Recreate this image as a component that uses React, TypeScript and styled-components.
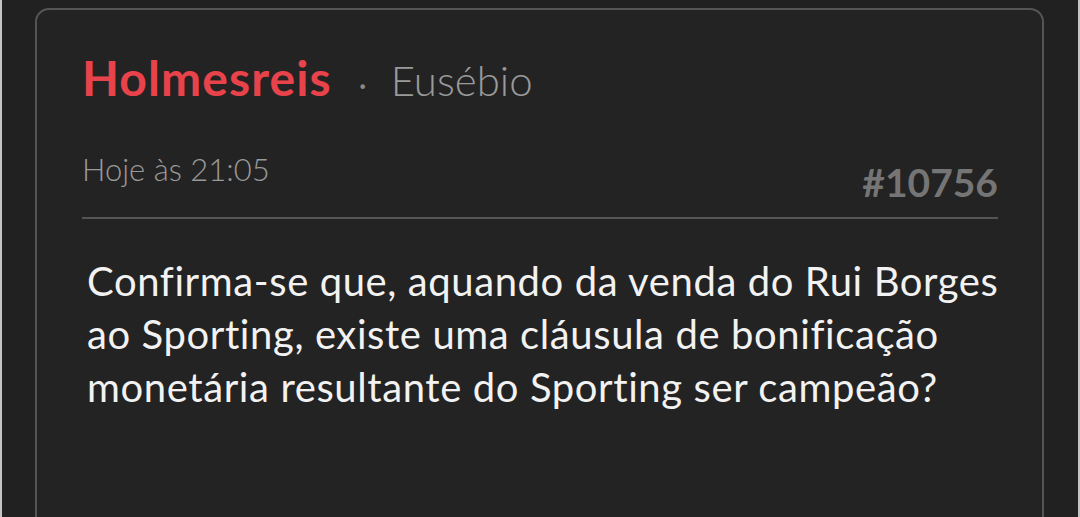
import styled, { createGlobalStyle } from "styled-components";

const GlobalStyle = createGlobalStyle`
  html, body {
    margin: 0;
    padding: 0;
    background: #212121;
  }
  body {
    font-family: Lato, "Open Sans", sans-serif;
    overflow: hidden;
  }
`;

function App() {
  return (
    <>
      <GlobalStyle />
      <Page>
        <Card>
          <Author>
            <Name>Holmesreis</Name>
            <Dot>·</Dot>
            <Rank>Eusébio</Rank>
          </Author>
          <Meta>
            <Time>Hoje às 21:05</Time>
            <PostId>#10756</PostId>
          </Meta>
          <Body>
            Confirma-se que, aquando da venda do Rui Borges
            <br />
            ao Sporting, existe uma cláusula de bonificação
            <br />
            monetária resultante do Sporting ser campeão?
          </Body>
        </Card>
      </Page>
    </>
  );
}

export default App;

const Page = styled.div`
  height: 517px;
  box-sizing: border-box;
  border-left: 2px solid #c4c4c4;
  border-right: 2px solid #c4c4c4;
  padding: 8px 34px 0 33px;
  overflow: hidden;
`;

const Card = styled.div`
  height: 560px;
  box-sizing: border-box;
  border: 2px solid #555;
  border-radius: 14px;
  background: #232323;
  padding: 39px 44px 0 45px;
`;

const Author = styled.div`
  display: flex;
  align-items: baseline;
  height: 60px;
`;

const Name = styled.span`
  font-size: 48px;
  font-weight: 700;
  letter-spacing: 1.1px;
  color: #e8434a;
`;

const Dot = styled.span`
  font-size: 30px;
  color: #8a8a8a;
  margin: 0 24px 0 27px;
`;

const Rank = styled.span`
  font-size: 42px;
  font-weight: 300;
  color: #9a9a9a;
`;

const Meta = styled.div`
  display: flex;
  justify-content: space-between;
  align-items: flex-end;
  margin-top: 41px;
  padding-bottom: 12px;
  border-bottom: 2px solid #555;
`;

const Time = styled.span`
  font-size: 31px;
  font-weight: 300;
  color: #9a9a9a;
  margin-bottom: 17px;
`;

const PostId = styled.span`
  font-size: 39px;
  font-weight: 700;
  color: #757575;
`;

const Body = styled.p`
  margin: 36px 0 0 5px;
  font-size: 40px;
  line-height: 53px;
  letter-spacing: 0.6px;
  color: #f2f2f2;
  white-space: nowrap;
`;
